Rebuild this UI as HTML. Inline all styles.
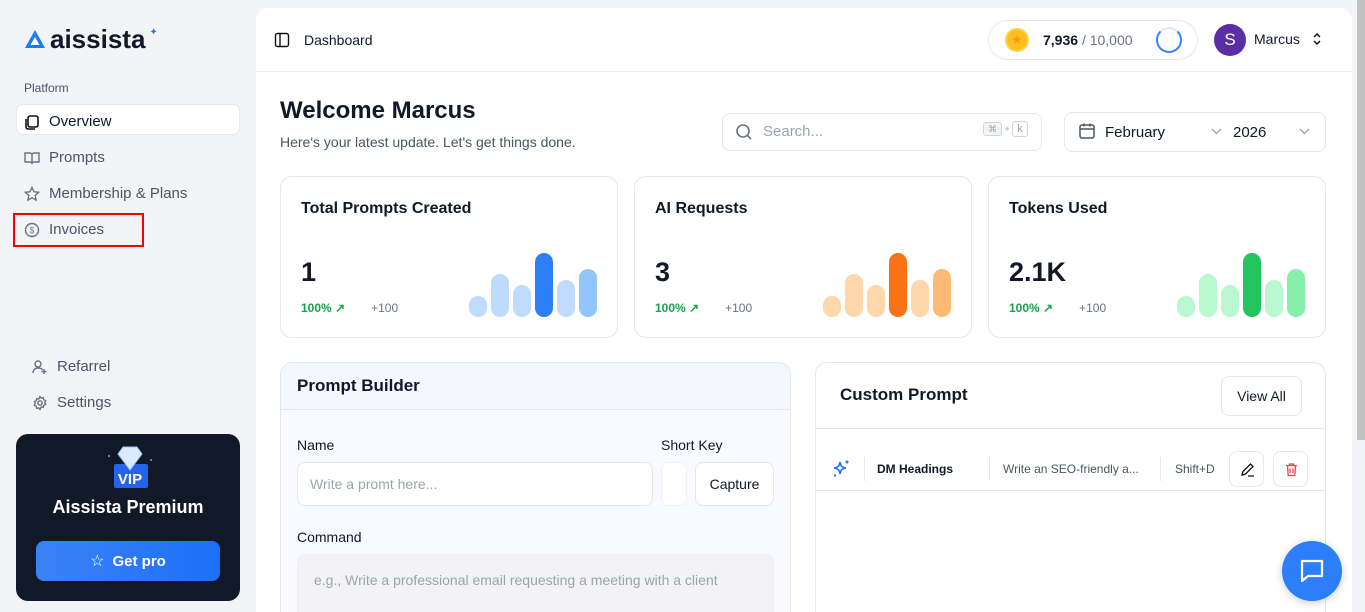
<!DOCTYPE html>
<html style="width:1365px;height:612px;overflow:hidden"><head><meta charset="utf-8"><style>
*{box-sizing:border-box;margin:0;padding:0}
body{width:1365px;height:612px;overflow:hidden;background:#f3f4f8;font-family:"Liberation Sans",sans-serif;color:#111827;position:relative}
.abs{position:absolute}
.nav{position:absolute;left:24px;font-size:15px;color:#4b5563;display:flex;align-items:center;gap:9px}
.card{position:absolute;background:#fff;border:1px solid #e5e7eb;border-radius:12px}
.bar{position:absolute;width:18px;border-radius:9px;bottom:0}
.ct{position:absolute;left:20px;top:23px;font-size:16px;font-weight:bold;color:#111827}
.cv{position:absolute;left:20px;top:80px;font-size:27px;font-weight:bold}
.cp{position:absolute;left:20px;top:124px;font-size:12px;color:#16a34a;font-weight:bold}
.cp span{color:#6b7280;font-weight:normal;margin-left:26px}
</style></head><body>
<div class="abs" style="left:24px;top:28px;display:flex;align-items:center;gap:4px">
<svg width="22" height="22" viewBox="0 0 22 22"><path d="M11 2 L21 20 H1 Z" fill="#1d7cf2"/><path d="M11 9 L15.5 17 H6.5 Z" fill="#fff"/></svg>
<span style="font-size:26px;color:#111827;letter-spacing:0px;line-height:22px;font-weight:bold">aissista</span><span style="color:#1d7cf2;font-size:10px;margin-top:-14px">✦</span></div>
<div class="abs" style="left:24px;top:81px;font-size:12px;color:#4b5563">Platform</div>
<div class="abs" style="left:16px;top:104px;width:224px;height:31px;background:#fff;border:1px solid #e5e7eb;border-radius:7px"></div>
<div class="nav" style="top:113px;color:#111827"><svg width="16" height="16" viewBox="0 0 16 16" fill="none" stroke="#111" stroke-width="1.6"><rect x="4" y="2" width="10" height="11" rx="2"/><path d="M2 5v8a2 2 0 0 0 2 2h7"/></svg>Overview</div>
<div class="nav" style="top:149px"><svg width="16" height="16" viewBox="0 0 16 16" fill="none" stroke="#6b7280" stroke-width="1.4"><path d="M1 3h5a2 2 0 0 1 2 2v9a2 2 0 0 0-2-2H1zM15 3h-5a2 2 0 0 0-2 2v9a2 2 0 0 1 2-2h5z"/></svg>Prompts</div>
<div class="nav" style="top:185px"><svg width="16" height="16" viewBox="0 0 16 16" fill="none" stroke="#6b7280" stroke-width="1.4"><path d="M8 1.5l2 4.2 4.6.6-3.4 3.2.9 4.6L8 11.8 3.9 14.1l.9-4.6L1.4 6.3 6 5.7z"/></svg>Membership &amp; Plans</div>
<div class="nav" style="top:221px"><svg width="16" height="16" viewBox="0 0 16 16" fill="none" stroke="#6b7280" stroke-width="1.4"><circle cx="8" cy="8" r="6.5"/><text x="8" y="11" font-size="8" text-anchor="middle" fill="#6b7280" stroke="none">$</text></svg>Invoices</div>
<div class="abs" style="left:13px;top:213px;width:131px;height:34px;border:2px solid #ff0000"></div>
<div class="nav" style="top:358px;left:32px"><svg width="16" height="16" viewBox="0 0 16 16" fill="none" stroke="#6b7280" stroke-width="1.4"><circle cx="6" cy="5" r="3"/><path d="M1 14c0-3 2-5 5-5s4 1 4.5 2M12 10v5M9.5 12.5h5"/></svg>Refarrel</div>
<div class="nav" style="top:394px;left:32px"><svg width="16" height="16" viewBox="0 0 16 16" fill="none" stroke="#6b7280" stroke-width="1.4"><circle cx="8" cy="8" r="2.2"/><path d="M8 1.5l1.3 1.6 2-.4.5 2 1.8.9-.8 1.9.8 1.9-1.8.9-.5 2-2-.4L8 14.5l-1.3-1.6-2 .4-.5-2-1.8-.9.8-1.9-.8-1.9 1.8-.9.5-2 2 .4z"/></svg>Settings</div>
<div class="abs" style="left:16px;top:434px;width:224px;height:167px;background:#111827;border-radius:12px">
<svg class="abs" style="left:90px;top:10px" width="48" height="46" viewBox="0 0 48 46"><path d="M2 12l1-1 1 1-1 1zM44 16l1-1 1 1-1 1z" fill="#cbd5e1"/><rect x="8" y="20" width="34" height="24" rx="2" fill="#2563eb"/><path d="M12 10 L17 3 H31 L36 10 L24 26 Z" fill="#dbeafe" stroke="#93c5fd"/><text x="24" y="40" font-size="15" font-weight="bold" fill="#fff" text-anchor="middle" font-family="Liberation Sans">VIP</text></svg>
<div class="abs" style="left:0;width:224px;top:63px;text-align:center;color:#fff;font-size:18px;font-weight:bold">Aissista Premium</div>
<div class="abs" style="left:20px;top:107px;width:184px;height:40px;border-radius:8px;background:linear-gradient(90deg,#3b82f6,#1d6ff8);color:#fff;font-size:15px;font-weight:bold;display:flex;align-items:center;justify-content:center;gap:8px"><span style="font-weight:normal;font-size:16px">☆</span>Get pro</div>
</div>
<div class="abs" style="left:256px;top:8px;width:1096px;height:604px;background:#fff;border-radius:12px 12px 0 0"></div>
<div class="abs" style="left:256px;top:71px;width:1096px;height:1px;background:#eef0f3"></div>
<div class="abs" style="left:1357px;top:0;width:8px;height:440px;background:#c1c1c1"></div>
<svg class="abs" style="left:274px;top:32px" width="16" height="16" viewBox="0 0 16 16" fill="none" stroke="#111" stroke-width="1.4"><rect x="1.5" y="1.5" width="13" height="13" rx="2"/><path d="M6 2v12"/></svg>
<div class="abs" style="left:304px;top:32px;font-size:14px">Dashboard</div>
<div class="abs" style="left:988px;top:20px;width:210px;height:40px;border:1px solid #e5e7eb;border-radius:20px"></div>
<div class="abs" style="left:1005px;top:28px;width:24px;height:24px;border-radius:50%;background:#fbbf24;border:2px solid #fcd34d;color:#f59e0b;font-size:13px;text-align:center;line-height:20px">★</div>
<div class="abs" style="left:1043px;top:32px;font-size:14px"><b>7,936</b> <span style="color:#6b7280">/ 10,000</span></div>
<div class="abs" style="left:1156px;top:27px;width:26px;height:26px;border-radius:50%;border:2.5px solid #3b82f6;border-top-color:#dbeafe"></div>
<div class="abs" style="left:1214px;top:24px;width:32px;height:32px;border-radius:50%;background:#5b2ea6;color:#fff;font-size:17px;text-align:center;line-height:32px">S</div>
<div class="abs" style="left:1254px;top:31px;font-size:14px">Marcus</div>
<svg class="abs" style="left:1312px;top:32px" width="10" height="14" viewBox="0 0 10 14" fill="none" stroke="#111" stroke-width="1.5"><path d="M2 5l3-3 3 3M2 9l3 3 3-3"/></svg>
<div class="abs" style="left:280px;top:97px;font-size:24px;font-weight:bold">Welcome Marcus</div>
<div class="abs" style="left:280px;top:134px;font-size:14px;color:#4b5563">Here's your latest update. Let's get things done.</div>
<div class="abs" style="left:722px;top:113px;width:320px;height:38px;border:1px solid #e5e7eb;border-radius:8px"></div>
<svg class="abs" style="left:735px;top:123px" width="18" height="18" viewBox="0 0 18 18" fill="none" stroke="#6b7280" stroke-width="1.6"><circle cx="8" cy="8" r="6"/><path d="M12.5 12.5L16 16"/></svg>
<div class="abs" style="left:763px;top:123px;font-size:15px;color:#9ca3af">Search...</div>
<div class="abs" style="left:983px;top:123px;font-size:9px;color:#9ca3af"><span style="border:1px solid #d1d5db;border-radius:3px;padding:1px 4px;background:#f3f4f6">⌘</span> + <span style="border:1px solid #d1d5db;border-radius:3px;padding:1px 4px;font-size:11px">k</span></div>
<div class="abs" style="left:1064px;top:112px;width:262px;height:40px;border:1px solid #e5e7eb;border-radius:8px"></div>
<svg class="abs" style="left:1078px;top:122px" width="18" height="18" viewBox="0 0 18 18" fill="none" stroke="#4b5563" stroke-width="1.5"><rect x="2" y="3" width="14" height="13" rx="2"/><path d="M2 7h14M6 1.5v3M12 1.5v3"/></svg>
<div class="abs" style="left:1105px;top:124px;font-size:15px">February</div>
<svg class="abs" style="left:1211px;top:128px" width="11" height="7" viewBox="0 0 11 7" fill="none" stroke="#9ca3af" stroke-width="1.3"><path d="M1 1l4.5 4.5L10 1"/></svg>
<div class="abs" style="left:1233px;top:124px;font-size:15px">2026</div>
<svg class="abs" style="left:1299px;top:128px" width="11" height="7" viewBox="0 0 11 7" fill="none" stroke="#9ca3af" stroke-width="1.3"><path d="M1 1l4.5 4.5L10 1"/></svg>
<div class="card" style="left:280px;top:176px;width:338px;height:162px"><div class="ct">Total Prompts Created</div><div class="cv">1</div><div class="cp">100% ↗<span>+100</span></div>
<div class="abs" style="left:188px;top:0;width:130px;height:140px"><div class="bar" style="left:0;height:21px;background:#bfdbfe"></div><div class="bar" style="left:22px;height:43px;background:#bfdbfe"></div><div class="bar" style="left:44px;height:32px;background:#bfdbfe"></div><div class="bar" style="left:66px;height:64px;background:#2d7ff9"></div><div class="bar" style="left:88px;height:37px;background:#bfdbfe"></div><div class="bar" style="left:110px;height:48px;background:#93c5fd"></div></div></div>
<div class="card" style="left:634px;top:176px;width:338px;height:162px"><div class="ct">AI Requests</div><div class="cv">3</div><div class="cp">100% ↗<span>+100</span></div>
<div class="abs" style="left:188px;top:0;width:130px;height:140px"><div class="bar" style="left:0;height:21px;background:#fed7aa"></div><div class="bar" style="left:22px;height:43px;background:#fed7aa"></div><div class="bar" style="left:44px;height:32px;background:#fed7aa"></div><div class="bar" style="left:66px;height:64px;background:#f97316"></div><div class="bar" style="left:88px;height:37px;background:#fed7aa"></div><div class="bar" style="left:110px;height:48px;background:#fdba74"></div></div></div>
<div class="card" style="left:988px;top:176px;width:338px;height:162px"><div class="ct">Tokens Used</div><div class="cv">2.1K</div><div class="cp">100% ↗<span>+100</span></div>
<div class="abs" style="left:188px;top:0;width:130px;height:140px"><div class="bar" style="left:0;height:21px;background:#bbf7d0"></div><div class="bar" style="left:22px;height:43px;background:#bbf7d0"></div><div class="bar" style="left:44px;height:32px;background:#bbf7d0"></div><div class="bar" style="left:66px;height:64px;background:#22c55e"></div><div class="bar" style="left:88px;height:37px;background:#bbf7d0"></div><div class="bar" style="left:110px;height:48px;background:#86efac"></div></div></div>
<div class="card" style="left:280px;top:362px;width:511px;height:250px;background:#f8faff;overflow:hidden;border-bottom:none;border-radius:12px 12px 0 0">
<div style="height:47px;background:#f4f7fd;border-bottom:1px solid #e5e7eb;padding:13px 16px;font-size:17px;font-weight:bold">Prompt Builder</div>
<div class="abs" style="left:16px;top:74px;font-size:14px">Name</div>
<div class="abs" style="left:380px;top:74px;font-size:14px">Short Key</div>
<div class="abs" style="left:16px;top:99px;width:356px;height:44px;background:#fff;border:1px solid #e5e7eb;border-radius:8px;padding:13px 12px;font-size:14px;color:#9ca3af">Write a promt here...</div>
<div class="abs" style="left:380px;top:99px;width:26px;height:44px;background:#fff;border:1px solid #eef0f3;border-radius:8px"></div>
<div class="abs" style="left:414px;top:99px;width:79px;height:44px;background:#fff;border:1px solid #e5e7eb;border-radius:8px;text-align:center;line-height:42px;font-size:14px">Capture</div>
<div class="abs" style="left:16px;top:166px;font-size:14px">Command</div>
<div class="abs" style="left:16px;top:191px;width:477px;height:59px;background:#f3f3f5;border:1px solid #eceef1;border-bottom:none;border-radius:8px 8px 0 0;padding:17px 16px;font-size:14px;color:#9ca3af">e.g., Write a professional email requesting a meeting with a client</div>
</div>
<div class="card" style="left:815px;top:362px;width:511px;height:250px;border-bottom:none;border-radius:12px 12px 0 0">
<div class="abs" style="left:24px;top:22px;font-size:17px;font-weight:bold">Custom Prompt</div>
<div class="abs" style="left:405px;top:13px;width:81px;height:40px;border:1px solid #e5e7eb;border-radius:8px;text-align:center;line-height:38px;font-size:14px">View All</div>
<div class="abs" style="left:0;top:65px;width:509px;height:1px;background:#e5e7eb"></div>
<div class="abs" style="left:0;top:127px;width:509px;height:1px;background:#e5e7eb"></div>
<svg class="abs" style="left:16px;top:96px" width="20" height="20" viewBox="0 0 20 20" fill="none" stroke="#1d6ff8" stroke-width="1.6"><path d="M8 3c.6 4 2 5.4 6 6-4 .6-5.4 2-6 6-.6-4-2-5.4-6-6 4-.6 5.4-2 6-6z"/><path d="M15 1.5v3M13.5 3h3M3 15.5v2M2 16.5h2"/></svg>
<div class="abs" style="left:48px;top:94px;width:1px;height:24px;background:#e5e7eb"></div>
<div class="abs" style="left:61px;top:99px;font-size:12px;font-weight:bold">DM Headings</div>
<div class="abs" style="left:173px;top:94px;width:1px;height:24px;background:#e5e7eb"></div>
<div class="abs" style="left:187px;top:99px;font-size:12px;color:#4b5563">Write an SEO-friendly a...</div>
<div class="abs" style="left:344px;top:94px;width:1px;height:24px;background:#e5e7eb"></div>
<div class="abs" style="left:359px;top:99px;font-size:12px;color:#4b5563">Shift+D</div>
<div class="abs" style="left:413px;top:88px;width:35px;height:36px;border:1px solid #e5e7eb;border-radius:8px"><svg style="margin:10px" width="15" height="15" viewBox="0 0 15 15" fill="none" stroke="#111" stroke-width="1.3"><path d="M2 13l1-3.5L10.5 2l2.5 2.5L5.5 12zM8 14h6"/></svg></div>
<div class="abs" style="left:457px;top:88px;width:35px;height:36px;border:1px solid #e5e7eb;border-radius:8px"><svg style="margin:10px" width="15" height="15" viewBox="0 0 15 15" fill="none" stroke="#ef4444" stroke-width="1.3"><path d="M2 3.5h11M5.5 3.5V2h4v1.5M3.5 3.5l.7 10h6.6l.7-10M6 6.5v4.5M9 6.5v4.5"/></svg></div>
</div>
<div class="abs" style="left:1282px;top:541px;width:60px;height:60px;border-radius:50%;background:#2d7ff9;box-shadow:0 2px 8px rgba(0,0,0,.2)"><svg style="margin:16px" width="28" height="28" viewBox="0 0 28 28" fill="none" stroke="#fff" stroke-width="2.2"><path d="M4 4h20v15H10l-6 5z" stroke-linejoin="round"/></svg></div>
</body></html>
